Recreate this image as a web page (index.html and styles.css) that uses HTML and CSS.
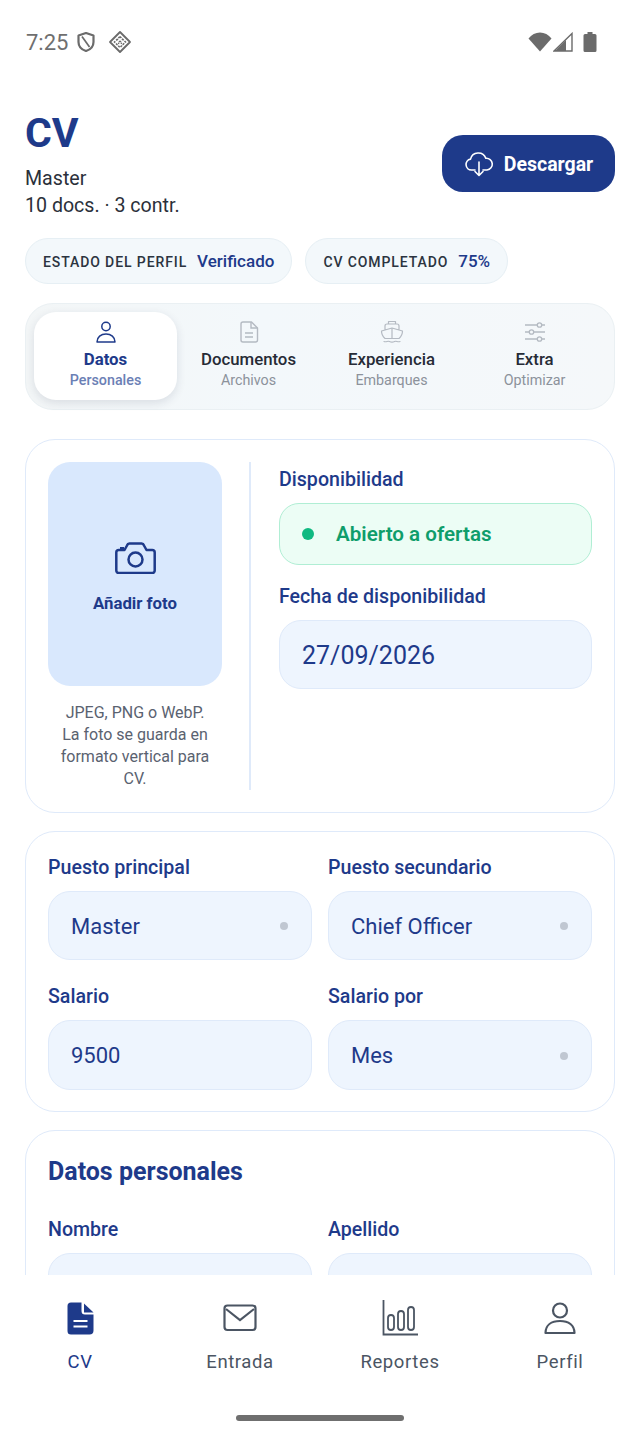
FILE: index.html
```html
<!DOCTYPE html>
<html lang="es">
<head>
<meta charset="utf-8">
<title>CV</title>
<link rel="stylesheet" href="styles.css">
</head>
<body>
<div class="screen">
  <div class="statusbar">
    <div class="status-left">
      <span class="time">7:25</span>
      <svg class="st-shield" viewBox="0 0 18 20" width="18" height="20"><path d="M9 1 1.500 3.500V10c0 4.400 3 7.600 7.500 9 4.500-1.400 7.500-4.600 7.500-9V3.500z" fill="none" stroke="#6b6b6b" stroke-width="2.200" stroke-linejoin="round"/><path d="M5 4.500 12.500 15" stroke="#6b6b6b" stroke-width="1.700"/></svg>
      <svg class="st-diamond" viewBox="0 0 24 24" width="24" height="24"><path d="M12 2 22 12 12 22 2 12z" fill="none" stroke="#6b6b6b" stroke-width="1.800" stroke-linejoin="round"/><path d="M12 6.500 17.500 12 12 17.500 6.500 12z" fill="none" stroke="#6b6b6b" stroke-width="1.500" stroke-dasharray="2 1.200"/><path d="M9 9 15 15M15 9 9 15" stroke="#6b6b6b" stroke-width="1.300" stroke-dasharray="1.500 1.200"/></svg>
    </div>
    <div class="status-right">
      <svg viewBox="0 0 24 20" width="24" height="20"><path d="M12 19.500 .5 6.500C3.500 2.500 7.500 .5 12 .5S20.500 2.500 23.500 6.500z" fill="#6b6b6b"/></svg>
      <svg viewBox="0 0 20 20" width="20" height="20"><path d="M19 1.500V19H1z" fill="none" stroke="#6b6b6b" stroke-width="1.400"/><path d="M13 8V19H2z" fill="#6b6b6b"/></svg>
      <svg class="st-batt" viewBox="0 0 14 20" width="14" height="20"><path d="M4.500 0h5v2H12a1.500 1.500 0 0 1 1.500 1.500v15A1.500 1.500 0 0 1 12 20H2A1.500 1.500 0 0 1 .5 18.500v-15A1.500 1.500 0 0 1 2 2h2.500z" fill="#6b6b6b"/></svg>
    </div>
  </div>

  <header class="head">
    <div class="head-text">
      <h1 class="title">CV</h1>
      <p class="sub">Master</p>
      <p class="sub">10 docs. · 3 contr.</p>
    </div>
    <div class="download">
      <svg viewBox="0 0 30 26" width="30" height="26"><path d="M11 19H7.500A5.500 5.500 0 0 1 6.500 8.100 8 8 0 0 1 21.800 7.300 5.800 5.800 0 0 1 23 19h-4" fill="none" stroke="#fff" stroke-width="1.600" stroke-linecap="round" stroke-linejoin="round"/><path d="M15 11v13M11 20.500l4 4 4-4" fill="none" stroke="#fff" stroke-width="1.600" stroke-linecap="round" stroke-linejoin="round"/></svg>
      <span class="download-label">Descargar</span>
    </div>
  </header>

  <div class="pills">
    <div class="pill"><span class="pill-k">ESTADO DEL PERFIL</span><span class="pill-v">Verificado</span></div>
    <div class="pill"><span class="pill-k">CV COMPLETADO</span><span class="pill-v">75%</span></div>
  </div>

  <nav class="tabs">
    <div class="tab active">
      <svg viewBox="0 0 24 24" width="24" height="24"><circle cx="12" cy="6.500" r="4.200" fill="none" stroke="#1e3a8a" stroke-width="1.500"/><path d="M3 22c0-5 4-8 9-8s9 3 9 8z" fill="none" stroke="#1e3a8a" stroke-width="1.500" stroke-linejoin="round"/></svg>
      <span class="tab-t">Datos</span><span class="tab-s">Personales</span>
    </div>
    <div class="tab">
      <svg viewBox="0 0 24 24" width="24" height="24"><path d="M6 2h8.500l6 6v12a2 2 0 0 1-2 2H6a2 2 0 0 1-2-2V4a2 2 0 0 1 2-2z" fill="none" stroke="#b4bac2" stroke-width="1.400" stroke-linejoin="round"/><path d="M14 2v6h6.500M8 13h8M8 17h8" fill="none" stroke="#b4bac2" stroke-width="1.400"/></svg>
      <span class="tab-t">Documentos</span><span class="tab-s">Archivos</span>
    </div>
    <div class="tab">
      <svg viewBox="0 0 24 24" width="24" height="24"><path d="M8.500 4V1.500h7V4M5 9V6c0-1.200 1-2 2-2h10c1 0 2 .8 2 2v3M1.500 11 12 8l10.500 3c0 3-1.200 5.500-3.500 7.500H5C2.700 16.500 1.500 14 1.500 11zM12 8v10.500M4 21.500c2.500 1 3.500-1 5.500 0s3 1 5 0 3 1 5.500 0" fill="none" stroke="#b4bac2" stroke-width="1.200" stroke-linejoin="round" stroke-linecap="round"/></svg>
      <span class="tab-t">Experiencia</span><span class="tab-s">Embarques</span>
    </div>
    <div class="tab">
      <svg viewBox="0 0 24 24" width="24" height="24"><path d="M2 5h12M19 5h3M2 12h4M11 12h11M2 19h12M19 19h3" stroke="#b4bac2" stroke-width="1.400"/><circle cx="16.500" cy="5" r="2.200" fill="none" stroke="#b4bac2" stroke-width="1.300"/><circle cx="8.500" cy="12" r="2.200" fill="none" stroke="#b4bac2" stroke-width="1.300"/><circle cx="16.500" cy="19" r="2.200" fill="none" stroke="#b4bac2" stroke-width="1.300"/></svg>
      <span class="tab-t">Extra</span><span class="tab-s">Optimizar</span>
    </div>
  </nav>

  <section class="card card-photo">
    <div class="photo-col">
      <div class="photo">
        <svg viewBox="0 0 41 32" width="41" height="32"><path d="M1.300 10.500a2.500 2.500 0 0 1 2.500-2.500H9.500l2.500-4.500a3 3 0 0 1 2.500-2h12a3 3 0 0 1 2.500 2L31.500 8h5.700a2.500 2.500 0 0 1 2.500 2.500v18a2.500 2.500 0 0 1-2.500 2.500H3.800a2.500 2.500 0 0 1-2.500-2.500z" fill="none" stroke="#1e3a8a" stroke-width="2.500" stroke-linejoin="round"/><path d="M5 7V5h4v3" fill="#1e3a8a"/><circle cx="20.500" cy="17.500" r="7" fill="none" stroke="#1e3a8a" stroke-width="2.500"/></svg>
        <span class="photo-label">Añadir foto</span>
      </div>
      <p class="photo-note">JPEG, PNG o WebP. La foto se guarda en formato vertical para CV.</p>
    </div>
    <div class="avail">
      <div class="label">Disponibilidad</div>
      <div class="status"><i class="status-dot"></i><span>Abierto a ofertas</span></div>
      <div class="label label-date">Fecha de disponibilidad</div>
      <div class="field">27/09/2026</div>
    </div>
  </section>

  <section class="card">
    <div class="grid">
      <div><div class="label">Puesto principal</div><div class="field select"><span>Master</span><i class="dot"></i></div></div>
      <div><div class="label">Puesto secundario</div><div class="field select"><span>Chief Officer</span><i class="dot"></i></div></div>
      <div><div class="label">Salario</div><div class="field">9500</div></div>
      <div><div class="label">Salario por</div><div class="field select"><span>Mes</span><i class="dot"></i></div></div>
    </div>
  </section>

  <section class="card">
    <h2 class="card-title">Datos personales</h2>
    <div class="grid">
      <div><div class="label">Nombre</div><div class="field"></div></div>
      <div><div class="label">Apellido</div><div class="field"></div></div>
    </div>
  </section>

  <footer class="bottom">
    <div class="bottom-items">
      <div class="item current">
        <div class="item-icon"><svg viewBox="0 0 27 33" width="27" height="33"><path d="M4 .5h10.500v8.500A3.500 3.500 0 0 0 18 12.500h8.500V28.500a4 4 0 0 1-4 4H4A3.500 3.500 0 0 1 .5 29V4A3.500 3.500 0 0 1 4 .5z" fill="#1e3a8a"/><path d="M17 1.500 26.500 10.500H17z" fill="#1e3a8a"/><path d="M6.500 19h14M6.500 24.500h14" stroke="#fff" stroke-width="2.200"/></svg></div>
        <span>CV</span>
      </div>
      <div class="item">
        <div class="item-icon"><svg viewBox="0 0 34 28" width="34" height="28"><rect x="1.500" y="1.500" width="31" height="24.500" rx="3" fill="none" stroke="#4b5563" stroke-width="2.200"/><path d="M3 5l14 11L31 5" fill="none" stroke="#4b5563" stroke-width="2.200"/></svg></div>
        <span>Entrada</span>
      </div>
      <div class="item">
        <div class="item-icon"><svg viewBox="0 0 36 36" width="36" height="36"><path d="M1.500 0v34.500H36" fill="none" stroke="#4b5563" stroke-width="1.800"/><rect x="6" y="15" width="6" height="15" rx="3" fill="none" stroke="#4b5563" stroke-width="1.800"/><rect x="16" y="11" width="6" height="19" rx="3" fill="none" stroke="#4b5563" stroke-width="1.800"/><rect x="26" y="7" width="6" height="23" rx="3" fill="none" stroke="#4b5563" stroke-width="1.800"/></svg></div>
        <span>Reportes</span>
      </div>
      <div class="item">
        <div class="item-icon"><svg viewBox="0 0 32 34" width="32" height="34"><circle cx="16" cy="9.500" r="7" fill="none" stroke="#4b5563" stroke-width="2.200"/><path d="M1.500 32c0-8 6-12 14.500-12s14.500 4 14.500 12z" fill="none" stroke="#4b5563" stroke-width="2.200" stroke-linejoin="round"/></svg></div>
        <span>Perfil</span>
      </div>
    </div>
    <div class="handle"></div>
  </footer>
</div>
</body>
</html>
```

FILE: styles.css
```css
* { box-sizing: border-box; }
html, body { margin: 0; padding: 0; background: #fff; }
body { font-family: Roboto, "Liberation Sans", sans-serif; }
p, h1, h2 { margin: 0; }

.screen {
  position: relative;
  width: 640px;
  height: 1437px;
  overflow: hidden;
  background: #fff;
  padding: 0 25px;
}

.statusbar {
  height: 84px;
  margin: 0 18px 0 1px;
  display: flex;
  justify-content: space-between;
  align-items: center;
}
.status-left, .status-right { display: flex; align-items: center; }
.status-right { gap: 1px; }
.st-batt { margin-left: 9px; }
.time { font-size: 22px; color: #6f6f6f; }
.st-shield { margin-left: 9px; }
.st-diamond { margin-left: 13px; }

.head {
  height: 142px;
  padding-top: 27px;
  display: flex;
  justify-content: space-between;
  align-items: flex-start;
}
.title { font-size: 41px; line-height: 44px; font-weight: 700; color: #1e3a8a; }
.sub { font-size: 19.600px; line-height: 27px; color: #2b303a; }
.title + .sub { margin-top: 10px; }

.download {
  margin-top: 24px;
  width: 173px;
  height: 57px;
  border-radius: 21px;
  background: #1e3a8a;
  color: #fff;
  display: flex;
  align-items: center;
  justify-content: center;
  gap: 10px;
  font-size: 19.500px;
  font-weight: 700;
}
.download-label { padding-top: 2px; }

.pills { display: flex; gap: 13px; margin-top: 12px; }
.pill {
  height: 46px;
  padding: 0 17px;
  border-radius: 23px;
  background: #f3f8fb;
  border: 1px solid #e6eff4;
  display: flex;
  align-items: center;
  gap: 10px;
}
.pill-k { font-size: 14px; font-weight: 500; color: #2b3440; letter-spacing: .9px; padding-top: 2px; }
.pill-v { font-size: 17px; font-weight: 500; color: #1e3a8a; }

.tabs {
  margin-top: 19px;
  height: 107px;
  padding: 8px;
  border-radius: 28px;
  background: linear-gradient(90deg, #f3f6f7, #f3f8fb 40%, #f5f8fa);
  border: 1px solid #eaf0f3;
  display: grid;
  grid-template-columns: repeat(4, 1fr);
}
.tab {
  height: 88px;
  border-radius: 22px;
  display: flex;
  flex-direction: column;
  align-items: center;
  padding-top: 8px;
}
.tab.active { background: #fff; box-shadow: 0 3px 10px rgba(30, 40, 70, .12); }
.tab-t { font-size: 16.800px; line-height: 20px; font-weight: 500; color: #262b36; margin-top: 5px; }
.tab-s { font-size: 14.300px; line-height: 20px; font-weight: 400; color: #8c929b; margin-top: 1px; }
.active .tab-t { color: #1e3a8a; font-weight: 700; }
.active .tab-s { color: #6b80b5; font-weight: 500; }

.card {
  margin-top: 18px;
  border: 1.500px solid #dfeafa;
  border-radius: 30px;
  padding: 23.500px 22px 21px;
  background: #fff;
}
.card-photo {
  margin-top: 29px;
  height: 374px;
  padding-top: 21.500px;
  padding-bottom: 22px;
  display: flex;
}
.photo-col { width: 174px; flex: none; }
.photo {
  height: 224px;
  border-radius: 22px;
  background: #d9e8fd;
  display: flex;
  flex-direction: column;
  align-items: center;
  padding-top: 80px;
}
.photo-label { margin-top: 18px; font-size: 16.800px; line-height: 22px; font-weight: 700; color: #1e3a8a; }
.photo-note {
  margin-top: 16px;
  padding: 0 10px;
  font-size: 16px;
  line-height: 22px;
  color: #5a6270;
  text-align: center;
}
.avail {
  flex: 1;
  margin-left: 27px;
  padding: 6px 0 0 28px;
  border-left: 2px solid #dfeafa;
}
.avail .field { font-size: 25px; }

.label { font-size: 19.600px; line-height: 24px; font-weight: 500; color: #1e3a8a; }
.label-date { margin-top: 20px; }
.status {
  margin-top: 11px;
  height: 62px;
  border-radius: 20px;
  background: #ecfdf5;
  border: 1.500px solid #b0eed4;
  display: flex;
  align-items: center;
  padding: 0 22px;
  font-size: 20.600px;
  font-weight: 600;
  color: #0f9d6b;
}
.status-dot { width: 12px; height: 12px; border-radius: 50%; background: #10b981; margin-right: 22px; }
.field {
  margin-top: 11px;
  height: 69.500px;
  border-radius: 22px;
  background: #eef5fe;
  border: 1.500px solid #dfeafa;
  display: flex;
  align-items: center;
  padding: 2px 22px 0;
  font-size: 22px;
  color: #1e3a8a;
}
.select { justify-content: space-between; padding-right: 23px; }
.dot { width: 8px; height: 8px; border-radius: 50%; background: #c0c7d2; }

.grid {
  display: grid;
  grid-template-columns: 264px 264px;
  column-gap: 16px;
  row-gap: 25px;
}
.card-title { font-size: 25px; line-height: 30px; font-weight: 700; color: #1e3a8a; margin: 3px 0 31px; }

.bottom {
  position: absolute;
  left: 0;
  right: 0;
  bottom: 0;
  height: 162px;
  background: #fff;
}
.bottom-items { display: grid; grid-template-columns: repeat(4, 1fr); padding-top: 25px; }
.item {
  display: flex;
  flex-direction: column;
  align-items: center;
  font-size: 18.500px;
  letter-spacing: .6px;
  color: #4b5563;
}
.item-icon { height: 36px; display: flex; align-items: center; justify-content: center; }
.item span { line-height: 24px; margin-top: 14px; }
.item.current { color: #1e3a8a; }
.handle {
  width: 168px;
  height: 6px;
  border-radius: 3px;
  background: #6f6f6f;
  margin: 41px auto 0;
}
```
